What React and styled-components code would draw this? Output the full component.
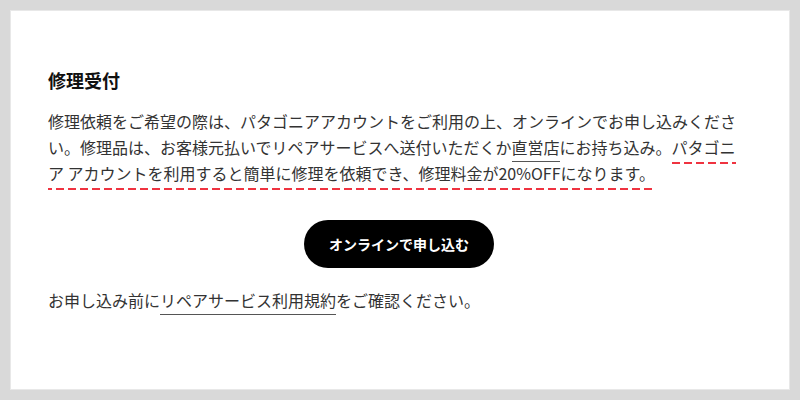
import React from 'react';
import styled, { createGlobalStyle } from 'styled-components';

const GlobalStyle = createGlobalStyle`
    html, body {
        margin: 0;
        padding: 0;
        background-color: #d9d9d9;
    }
    body {
        font-family: "Noto Sans CJK JP", "Noto Sans", sans-serif;
    }
`

const Page = styled.div`
    width: 800px;
    height: 400px;
    padding: 11px;
    box-sizing: border-box;
`

const Panel = styled.section`
    height: 100%;
    box-sizing: border-box;
    background-color: #ffffff;
    box-shadow: 0 0 0 1px #e8e8e8;
    padding: 56px 42px 0 37px;
`

const Title = styled.h2`
    margin: 0;
    font-size: 18px;
    line-height: 26px;
    font-weight: 700;
    color: #111;
`

const Paragraph = styled.p`
    margin: 15px 0 0;
    font-size: 16px;
    line-height: 26px;
    color: #333;
`

const Link = styled.a`
    color: inherit;
    text-decoration: none;
    padding-bottom: 2px;
    border-bottom: 1px solid #555;
`

const DashedLink = styled.a`
    color: inherit;
    text-decoration: none;
    padding-bottom: 5px;
    background-image: repeating-linear-gradient(to right, #ef3340 0 8px, transparent 8px 12px);
    background-size: 100% 2px;
    background-position: left bottom;
    background-repeat: no-repeat;
`

const ButtonRow = styled.div`
    display: flex;
    justify-content: center;
    margin-top: 34px;
    padding-left: 3px;
`

const PillButton = styled.button`
    width: 190px;
    height: 48px;
    border: none;
    border-radius: 24px;
    background-color: #000;
    color: #fff;
    font-family: inherit;
    font-size: 14px;
    font-weight: 700;
    cursor: pointer;
`

const Note = styled.p`
    margin: 19px 0 0;
    font-size: 16px;
    line-height: 26px;
    color: #333;
`

function App(){
    return (
      <Page>
        <GlobalStyle />
        <Panel>
            <Title>修理受付</Title>
            <Paragraph>
                修理依頼をご希望の際は、パタゴニアアカウントをご利用の上、オンラインでお申し込みください。修理品は、お客様元払いでリペアサービスへ送付いただくか<Link href="#">直営店</Link>にお持ち込み。<DashedLink href="#">パタゴニア アカウントを利用すると簡単に修理を依頼でき、修理料金が20%OFFになります。</DashedLink>
            </Paragraph>
            <ButtonRow>
                <PillButton>オンラインで申し込む</PillButton>
            </ButtonRow>
            <Note>
                お申し込み前に<Link href="#">リペアサービス利用規約</Link>をご確認ください。
            </Note>
        </Panel>
      </Page>
    )
}

export default App;
